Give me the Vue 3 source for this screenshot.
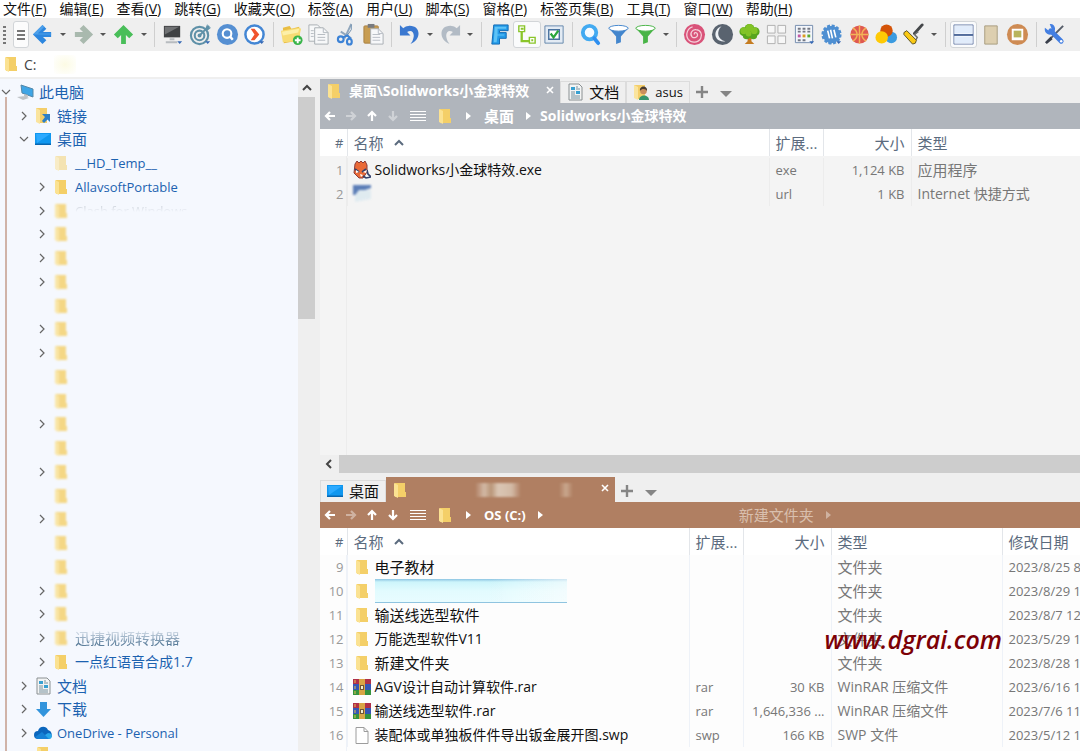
<script setup>
import { ref } from 'vue';

const menus = [
  ['文件', 'F'], ['编辑', 'E'], ['查看', 'V'], ['跳转', 'G'], ['收藏夹', 'O'], ['标签', 'A'], ['用户', 'U'],
  ['脚本', 'S'], ['窗格', 'P'], ['标签页集', 'B'], ['工具', 'T'], ['窗口', 'W'], ['帮助', 'H'],
];

// "|" is a separator, "v" a drop-down caret, "*" marks a pressed button
const toolbar = [
  'back', 'v', 'forward', 'v', 'up', 'v', '|',
  'monitor', 'target', 'find', 'go', '|',
  'newfolder', 'copy', 'cut', 'paste', '|',
  'undo', 'v', 'redo', 'v', '|',
  'letter', '*subtree', 'check', '|',
  'magnifier', 'funnel', 'funnelgreen', 'v', '|',
  'spiral', 'moon', 'oak', 'grid', 'calendar', 'badge', 'ball', 'circles', 'brush', 'v', '|',
  '*split', 'page', 'frame', '|',
  'tools',
];

const drop = '<path d="M17 19h5l-2.500 3z" fill="#3568b5"/>';

const icons = {
  back: '<path d="M2 12L12 2l4 4-3.500 3.500H21v5h-8.500L16 18l-4 4z" fill="#2d87df"/><path d="M2 12L12 2l2 2-7 7h14v1z" fill="#4da0ea"/>',
  forward: '<path d="M22 12L12 2 8 6l3.500 3.500H3v5h8.500L8 18l4 4z" fill="#a9b9ae"/>',
  up: '<path d="M12 2L2 12l4 4 3.500-3.500V22h5v-9.500L18 16l4-4z" fill="#49be59"/>',
  monitor: '<path d="M3 3h17v12H3z" fill="#404244"/><path d="M4 4h15L4 12z" fill="#707274"/><path d="M9 16h5v2H9zM5 19h12v2H5z" fill="#b8bcc0"/>' + drop,
  target: '<g fill="none" stroke="#5f91a8" stroke-width="2.200"><circle cx="11" cy="13" r="9"/><circle cx="11" cy="13" r="5"/></g><circle cx="11" cy="13" r="2" fill="#5f91a8"/><path d="M11 13L21 3" stroke="#5f91a8" stroke-width="2"/><path d="M17 6l2-5 1 3 3 1-4 3z" fill="#5f91a8"/>' + drop,
  find: '<circle cx="12" cy="12" r="11" fill="#558fd2"/><circle cx="11.500" cy="11" r="4.500" fill="none" stroke="#fff" stroke-width="2.200"/><path d="M14.500 14l3 3.500" stroke="#fff" stroke-width="2.600"/>',
  go: '<circle cx="12" cy="12" r="9.500" fill="#fff" stroke="#4386d4" stroke-width="2.600"/><path d="M8 6h4l5 6-5 6H8l4-6z" fill="#f0532d"/>' + drop,
  newfolder: '<path d="M3 5l7-2 2 3 8-2 1 14-17 3z" fill="#e9bd42"/><path d="M1 8l19-3 2 1-3 13-16 1z" fill="#f8dc74"/><path d="M2 9l18-3-1 4-16 3z" fill="#fdf0a8"/><circle cx="18.500" cy="18" r="5" fill="#38b449"/><path d="M18.500 15v6M15.500 18h6" stroke="#fff" stroke-width="2"/>',
  copy: '<g fill="#f7f8f9" stroke="#a8adb3"><path d="M2 2h9l4 4v13H2z"/><path d="M8 5h9l5 5v12H8z"/></g><path d="M17 5v5h5M11 12h8M11 15h8M11 18h8M4 8h3M4 11h3M4 14h3" fill="none" stroke="#b5bac0"/>',
  cut: '<path d="M17 1l-7 15M6 9l11 7" stroke="#91a7bd" stroke-width="2"/><path d="M17 2v5l-5 7" stroke="#6c8cac" fill="none"/><g fill="none" stroke="#3d83d6" stroke-width="2.200"><circle cx="6" cy="17" r="3"/><ellipse cx="15" cy="19.500" rx="2.500" ry="3"/></g><path d="M8 15l5-2 3 3" stroke="#3d83d6" stroke-width="2" fill="none"/>',
  paste: '<rect x="2" y="3" width="15" height="18" rx="1" fill="#c89d52" stroke="#a98244"/><path d="M6 1h7v4H6z" fill="#787b80"/><path d="M9 6h8l5 5v11H9z" fill="#f7f8fa" stroke="#a9afb5"/><path d="M17 6v5h5M11 12h8M11 15h8M11 18h8" fill="none" stroke="#b9bec5"/>',
  undo: '<path d="M2 2v11h11L9.500 9.500C14 6 19 10 15 19l-2 3c12-5 11-20-2-19-3 0-4 1-5.500 2.500z" fill="#3a78d0"/>',
  redo: '<path d="M22 2v11H11l3.500-3.500C10 6 5 10 9 19l2 3C-1 17 0 2 13 3c3 0 4 1 5.500 2.500z" fill="#b2bbc5"/>',
  letter: '<path d="M6 2h15v6h-9v2h7v6h-7v6H4z" fill="#249be9" stroke="#126bb4"/><path d="M7 4h12v2h-9v6h7v1h-7l-1 7H6z" fill="#5fc3f6"/>',
  subtree: '<path d="M7 9v10h9" fill="none" stroke="#8ac52b" stroke-width="2.400"/><g fill="#fff" stroke="#8ac52b" stroke-width="1.500"><path d="M4 3h6v6H4zM15 15h6v6h-6z"/></g><path d="M6 6h3M17 18h2" stroke="#8ac52b" stroke-width="2"/>',
  check: '<path d="M2 3h19v18H2z" fill="#e3ebf4" stroke="#6487ac"/><path d="M6 7h11v10H6z" fill="#fff" stroke="#4a73a0" stroke-width="1.500"/><path d="M8 11l3 4 5-7" fill="none" stroke="#2aa63b" stroke-width="2.400"/>',
  magnifier: '<circle cx="11" cy="10" r="7" fill="#f5faff" stroke="#42aaf1" stroke-width="4"/><path d="M16 16l4 5" stroke="#2e8ff0" stroke-width="4" stroke-linecap="round"/>',
  funnel: '<path d="M1.500 5l8 9v8l5-2v-6l8-9z" fill="#4386cd"/><ellipse cx="12" cy="5.500" rx="10" ry="3" fill="#fff" stroke="#4386cd"/>',
  funnelgreen: '<path d="M1.500 5l8 9v8l5-2v-6l8-9z" fill="#48b446"/><ellipse cx="12" cy="5.500" rx="10" ry="3" fill="#fff" stroke="#48b446"/>',
  spiral: '<circle cx="12" cy="12" r="11" fill="#d95379"/><path d="M12 12c-1-2 2-3 3-.5 1 3-3 5-5.500 3-3-3 0-8 4-7.500 5 .5 7 5 5 9-3 5-10 5-13 1C2 12 5 5 10 4" fill="none" stroke="#f5d0da" stroke-width="1.300"/>',
  moon: '<circle cx="12" cy="12" r="11" fill="#59636f"/><path d="M11 3.500C1 7 3 21 15 19 7 18 5 9 11 3.500z" fill="#edf1f5"/>',
  oak: '<path d="M10 12h4v7l3 3H7l3-3z" fill="#c57c21"/><g fill="#57a51e"><circle cx="12" cy="6" r="5"/><circle cx="6" cy="9" r="4.500"/><circle cx="18" cy="9" r="4.500"/><circle cx="9" cy="13" r="4"/><circle cx="16" cy="13" r="4"/></g><g fill="#82c326"><circle cx="12" cy="5" r="4"/><circle cx="6" cy="8" r="3.500"/><circle cx="17" cy="8" r="3.500"/><circle cx="11" cy="11" r="3"/></g>',
  grid: '<path d="M2.500 2.500h8v8h-8zM13.500 2.500h8v8h-8zM2.500 13.500h8v8h-8zM13.500 13.500h8v8h-8z" fill="#f7f7f7" stroke="#b0b0b0"/>',
  calendar: '<path d="M2.500 2.500h18v18h-18z" fill="#f3f6fb" stroke="#748cae"/><path d="M5 6h3M10 6h3M15 6h3M5 9h3M10 9h3M15 9h3M5 18h3M10 18h3" stroke="#747884" stroke-width="2"/><path d="M5 13.500h3" stroke="#c259a4" stroke-width="3"/><path d="M10 13.500h3" stroke="#dc9b20" stroke-width="3"/><path d="M15 13.500h3" stroke="#5baa32" stroke-width="3"/>' + drop,
  badge: '<circle cx="12" cy="12" r="9" fill="#4e8fd2" stroke="#4e8fd2" stroke-width="3" stroke-dasharray="3 1.700"/><circle cx="12" cy="12" r="9" fill="#4e8fd2"/><path d="M8 8l2 8M11 7l2 9M14.500 7l2 8" stroke="#fff" stroke-width="1.700"/>' + drop,
  ball: '<circle cx="12" cy="12" r="9.500" fill="#df5951"/><path d="M12 2.500v19M2.500 12h19M5 5c6 4 6 10 0 14M19 5c-6 4-6 10 0 14" fill="none" stroke="#f3b357" stroke-width="1.500"/>',
  circles: '<circle cx="17" cy="15" r="6" fill="#3b9be0"/><circle cx="12" cy="8" r="6.500" fill="#d45308"/><circle cx="7" cy="15" r="6.500" fill="#ffca05"/>',
  brush: '<path d="M21 2l-8 9" stroke="#44474a" stroke-width="3" stroke-linecap="round"/><path d="M17 9l-4 3 3 3-3 5" fill="none" stroke="#6b6d6e" stroke-width="1.500"/><path d="M2 10l3-2 10 10-1 3-3 1-9-10z" fill="#fac914" stroke="#5b5220" stroke-width="1"/>',
  split: '<path d="M2 2h20v20H2z" fill="#fff" stroke="#7085ae"/><path d="M3 3h18v8H3zM3 14h18v7H3z" fill="#e1ecfb"/><path d="M2 12.500h20" stroke="#526c9c" stroke-width="2"/>',
  page: '<path d="M6 3h13v19H6z" fill="#ddcfb0" stroke="#a89d80"/>',
  frame: '<circle cx="12" cy="12" r="11" fill="#ce8b53"/><path d="M6 6h12v12H6z" fill="#fff"/><path d="M8 8h8v7H8z" fill="#b8b45c"/>',
  tools: '<path d="M21 3L8 16" stroke="#555c68" stroke-width="2"/><path d="M8 14l-6 6 2 2 6-5z" fill="#3a3f4c"/><path d="M8 8l11 11" stroke="#447fe2" stroke-width="5" stroke-linecap="round"/><path d="M2 5l4 3 3-2-2-5c6-1 8 8 2 11-5 1-8-3-7-7z" fill="#447fe2"/><circle cx="19" cy="19" r="1.300" fill="#fff"/>',
};

// 18x18 pictures used in the tree, tabs and lists
const glyphs = {
  folder: '<path d="M4 2h10v9h1v5H4z" fill="#f4cf68"/><path d="M3 2l4 2v13l-4-2z" fill="#fbe292"/>',
  pc: '<path d="M5 2l12 4v8L6 10z" fill="#3fa5e6" stroke="#5487a8"/><path d="M1 14l8-1 4 2-6 2zM8 11l4 1v2l-4-1z" fill="#bfc3c7"/>',
  link: '<path d="M2 1h11v15H5z" fill="#f4ce6a"/><path d="M2 1l4 2v14l-4-2z" fill="#fae49e"/><path d="M8 7h8v8l-2.500-2.500L10 16l-2-2 3-4z" fill="#2c7fc7"/>',
  desktop: '<path d="M1 3h16v12H1z" fill="#1097ef"/><path d="M1 13.500h16V15H1z" fill="#0866b0"/><path d="M2 4h14L3 13z" fill="#2caaff"/>',
  doc: '<path d="M3 1h10l3 3v13H3z" fill="#f3f4f4" stroke="#8a9092"/><path d="M5 4h4v3H5zM10 8h4v3h-4z" fill="#38a0d1"/><path d="M10 4h2M10 6h4M5 9h4M5 11h4M5 13h9M5 15h9" stroke="#78919d"/>',
  download: '<path d="M6 2h7v7h4l-7.500 8L2 9h4z" fill="#3294dc"/>',
  cloud: '<path d="M4 15a4 4 0 010-8c1-5 8-6 10-1 5 1 5 9 0 9z" fill="#0b66bd"/><path d="M5 15l9-6c5 0 5 6 1 6z" fill="#2aa8ea"/><path d="M1 13l7-5 7 7H4z" fill="#1581d6"/>',
  user: '<path d="M2 2h11v14H5z" fill="#f4ce6a"/><path d="M2 2l4 2v13l-4-2z" fill="#fae49e"/><path d="M7 17c0-6 10-6 10 0z" fill="#36956b"/><circle cx="11.500" cy="8" r="3.300" fill="#c98e5c"/><path d="M8 8c-1-6 8-6 7 0-1-2-5-3-7 0z" fill="#453a31"/>',
  fox: '<path d="M2 3l2-3 2 2 2-2 2 2 2-2 2 4v7l-4 6H6L1 12z" fill="#ea6a37" stroke="#8a3b38"/><path d="M2 8l4 3M13 8l-4 3M14 9l1 4 3 3-5 1-3-2" stroke="#33406c" stroke-width="1.600" fill="none"/><path d="M3 9l3 2-3 1zM10 11l4-2-1 3zM7 13l3 1-2 2z" fill="#fff"/>',
  rar: '<path d="M0 1h18v5H0z" fill="#b03048"/><path d="M0 6h18v6H0z" fill="#3557b5"/><path d="M0 12h18v5H0z" fill="#35933e"/><path d="M6 1h6v16H6z" fill="#d9a545"/><path d="M7 7h4v5H7z" fill="#6e5434"/><path d="M8 8h2v3H8z" fill="#f3efd0"/><path d="M2 2v3M2 8v3M2 13v3" stroke="#e6c24f"/>',
  file: '<path d="M3 1.500h8l4 4v12H3z" fill="#fff" stroke="#9c9c9c"/><path d="M11 1.500v4h4" fill="none" stroke="#9c9c9c"/>',
  smudge: '<path d="M0 0h18v3L6 7v3H0z" fill="#3560a8"/><path d="M6 5h12v9L2 17v-7z" fill="#dbe9f0"/>',
};

const hidden = (arrow) => ({ level: 2, arrow, icon: 'folder', soft: true, text: '' });

const tree = [
  { level: 0, arrow: 'down', icon: 'pc', text: '此电脑' },
  { level: 1, arrow: 'right', icon: 'link', text: '链接' },
  { level: 1, arrow: 'down', icon: 'desktop', text: '桌面' },
  { level: 2, icon: 'folder', pale: true, text: '__HD_Temp__' },
  { level: 2, arrow: 'right', icon: 'folder', text: 'AllavsoftPortable' },
  { level: 2, arrow: 'right', icon: 'folder', soft: true, text: 'Clash for Windows', fade: 'fade-low' },
  ...['right', 'right', 'right', '', 'right', 'right', '', '', 'right', '', 'right', '', 'right', '', '', 'right', 'right'].map(hidden),
  { level: 2, arrow: 'right', icon: 'folder', soft: true, text: '迅捷视频转换器', fade: 'fade-top' },
  { level: 2, arrow: 'right', icon: 'folder', text: '一点红语音合成1.7' },
  { level: 1, arrow: 'right', icon: 'doc', text: '文档' },
  { level: 1, arrow: 'right', icon: 'download', text: '下载' },
  { level: 1, arrow: 'right', icon: 'cloud', text: 'OneDrive - Personal' },
  { level: 1, icon: 'folder', text: '' },
];

const panes = [
  {
    id: 'top',
    tabs: [
      { icon: 'folder', text: '桌面\\Solidworks小金球特效', active: true },
      { icon: 'doc', text: '文档' },
      { icon: 'user', text: 'asus' },
    ],
    crumbs: ['桌面', 'Solidworks小金球特效'],
    columns: [
      { key: 'no', label: '#' }, { key: 'name', label: '名称' }, { key: 'ext', label: '扩展...' },
      { key: 'size', label: '大小' }, { key: 'type', label: '类型' },
    ],
    rows: [
      { no: 1, icon: 'fox', name: 'Solidworks小金球特效.exe', ext: 'exe', size: '1,124 KB', type: '应用程序' },
      { no: 2, icon: 'smudge', soft: true, name: '', ext: 'url', size: '1 KB', type: 'Internet 快捷方式' },
    ],
  },
  {
    id: 'bottom',
    tabs: [
      { icon: 'desktop', text: '桌面' },
      { icon: 'folder', text: '', active: true },
    ],
    crumbs: ['OS (C:)'],
    dimCrumb: '新建文件夹',
    columns: [
      { key: 'no', label: '#' }, { key: 'name', label: '名称' }, { key: 'ext', label: '扩展...' },
      { key: 'size', label: '大小' }, { key: 'type', label: '类型' }, { key: 'date', label: '修改日期' },
    ],
    rows: [
      { no: 9, icon: 'folder', name: '电子教材', type: '文件夹', date: '2023/8/25 8' },
      { no: 10, icon: 'folder', name: '', covered: true, type: '文件夹', date: '2023/8/29 1' },
      { no: 11, icon: 'folder', name: '输送线选型软件', type: '文件夹', date: '2023/8/7 12' },
      { no: 12, icon: 'folder', name: '万能选型软件V11', type: '文件夹', date: '2023/5/29 1' },
      { no: 13, icon: 'folder', name: '新建文件夹', type: '文件夹', date: '2023/8/28 1' },
      { no: 14, icon: 'rar', name: 'AGV设计自动计算软件.rar', ext: 'rar', size: '30 KB', type: 'WinRAR 压缩文件', date: '2023/6/16 1' },
      { no: 15, icon: 'rar', name: '输送线选型软件.rar', ext: 'rar', size: '1,646,336 ...', type: 'WinRAR 压缩文件', date: '2023/7/6 11' },
      { no: 16, icon: 'file', name: '装配体或单独板件件导出钣金展开图.swp', ext: 'swp', size: '166 KB', type: 'SWP 文件', date: '2023/5/12 1' },
    ],
  },
];

const address = ref('C:');

// Chinese glyphs look small next to Latin ones, so size the text by its script
const script = (value) => {
  const text = String(value ?? '');
  const han = /[\u4e00-\u9fff]/.test(text);
  if (!han) return 'latin';
  return /[A-Za-z0-9]/.test(text) ? 'mixed' : 'han';
};
</script>

<template>
  <div class="app">
    <nav class="menubar">
      <button v-for="[text, key] in menus" :key="key" class="menu">{{ text }}(<u>{{ key }}</u>)</button>
    </nav>

    <div class="toolbar">
      <span class="grip"></span>
      <button class="list-button" aria-label="menu"><i></i><i></i><i></i></button>
      <template v-for="(item, i) in toolbar" :key="i">
        <span v-if="item === '|'" class="separator"></span>
        <button v-else-if="item === 'v'" class="caret" aria-label="more"><i></i></button>
        <button v-else class="tool" :class="{ pressed: item[0] === '*' }" :aria-label="item">
          <svg viewBox="0 0 24 24" v-html="icons[item.replace('*', '')]"></svg>
        </button>
      </template>
    </div>

    <div class="address">
      <svg class="glyph" viewBox="0 0 18 18" v-html="glyphs.folder"></svg>
      <input v-model="address" type="text" aria-label="address" />
    </div>

    <main class="main">
      <aside class="side">
        <div class="tree">
          <a v-for="(node, i) in tree" :key="i" href="#" class="node" :class="'level' + node.level">
            <svg class="arrow" viewBox="0 0 12 12">
              <path v-if="node.arrow === 'right'" d="M4 2l4 4-4 4" />
              <path v-if="node.arrow === 'down'" d="M2 4l4 4 4-4" />
            </svg>
            <svg class="glyph" :class="{ soft: node.soft, pale: node.pale }" viewBox="0 0 18 18" v-html="glyphs[node.icon]"></svg>
            <span v-if="node.text" :class="[script(node.text), node.fade]">{{ node.text }}</span>
          </a>
        </div>
        <div class="vscroll">
          <svg class="scroll-arrow" viewBox="0 0 12 12"><path d="M2 8l4-4 4 4" /></svg>
          <div class="thumb"></div>
        </div>
      </aside>

      <div class="panes">
        <section v-for="pane in panes" :key="pane.id" class="pane" :class="pane.id">
          <div class="tabs">
            <button v-for="(tab, i) in pane.tabs" :key="i" class="tab" :class="{ active: tab.active }">
              <svg class="glyph" viewBox="0 0 18 18" v-html="glyphs[tab.icon]"></svg>
              <span v-if="tab.text" :class="script(tab.text)">{{ tab.text }}</span>
              <span v-else class="blot"></span>
              <svg v-if="tab.active" class="close" viewBox="0 0 8 8"><path d="M1 1l6 6M7 1l-6 6" /></svg>
            </button>
            <button class="tab-add" aria-label="new tab">
              <svg viewBox="0 0 12 12"><path d="M6 0v12M0 6h12" /></svg>
            </button>
            <button class="tab-more" aria-label="tab list"><i></i></button>
          </div>

          <div class="crumbs">
            <button class="nav" aria-label="back"><svg viewBox="0 0 12 12"><path d="M11 6H3M6 2L2 6l4 4" /></svg></button>
            <button class="nav dim" aria-label="forward"><svg viewBox="0 0 12 12"><path d="M1 6h8M6 2l4 4-4 4" /></svg></button>
            <button class="nav" aria-label="up"><svg viewBox="0 0 12 12"><path d="M6 11V3M2 6l4-4 4 4" /></svg></button>
            <button class="nav" :class="{ dim: pane.id === 'top' }" aria-label="down"><svg viewBox="0 0 12 12"><path d="M6 1v8M2 6l4 4 4-4" /></svg></button>
            <button class="burger" aria-label="options"><i></i><i></i><i></i><i></i></button>
            <svg class="glyph" viewBox="0 0 18 18" v-html="glyphs.folder"></svg>
            <span class="tri first"></span>
            <template v-for="(crumb, i) in pane.crumbs" :key="crumb">
              <a href="#" :class="script(crumb)">{{ crumb }}</a>
              <span v-if="i === 0" class="tri"></span>
            </template>
            <template v-if="pane.dimCrumb">
              <a href="#" class="dim-crumb">{{ pane.dimCrumb }}</a>
              <span class="tri dim"></span>
            </template>
          </div>

          <div class="list">
            <table>
              <colgroup>
                <col v-for="col in pane.columns" :key="col.key" :class="'w-' + col.key" />
              </colgroup>
              <thead>
                <tr>
                  <th v-for="col in pane.columns" :key="col.key" :class="[col.key, script(col.label)]">
                    {{ col.label }}
                    <svg v-if="col.key === 'name'" class="sort" viewBox="0 0 12 12"><path d="M2 8l4-4 4 4" /></svg>
                  </th>
                </tr>
              </thead>
              <tbody>
                <tr v-for="row in pane.rows" :key="row.no">
                  <td v-for="col in pane.columns" :key="col.key" :class="[col.key, script(row[col.key])]">
                    <div v-if="col.key === 'name'" class="file">
                      <svg class="glyph" :class="{ soft: row.soft }" viewBox="0 0 18 18" v-html="glyphs[row.icon]"></svg>
                      <span v-if="row.covered" class="cover"></span>
                      <span v-else>{{ row.name }}</span>
                    </div>
                    <template v-else>{{ row[col.key] }}</template>
                  </td>
                </tr>
              </tbody>
            </table>
          </div>

          <div v-if="pane.id === 'top'" class="hscroll">
            <svg class="scroll-arrow" viewBox="0 0 12 12"><path d="M8 2L4 6l4 4" /></svg>
            <div class="thumb"></div>
          </div>
          <div v-else class="watermark">www.dgrai.com</div>
        </section>
      </div>
    </main>
  </div>
</template>

<style>
body {
  margin: 0;
}
</style>

<style scoped>
.app {
  display: flex;
  flex-direction: column;
  height: 100vh;
  overflow: hidden;
  background: #efefef;
  font-family: "Open Sans", "Noto Sans CJK SC", sans-serif;
  font-size: 14px;
  color: #111;
}

.app * {
  box-sizing: border-box;
}

button {
  padding: 0;
  border: 0;
  background: none;
  font: inherit;
  color: inherit;
}

a {
  color: inherit;
  text-decoration: none;
}

svg {
  display: block;
  flex: none;
}

.latin {
  font-size: 13px;
}

.mixed {
  font-size: 14px;
}

.han {
  font-size: 15px;
}

.glyph {
  width: 18px;
  height: 18px;
}

.glyph.soft {
  opacity: 0.8;
  filter: blur(1px);
}

.glyph.pale {
  opacity: 0.5;
}

/* menu bar */
.menubar {
  display: flex;
  flex: none;
  gap: 13px;
  height: 18px;
  padding-left: 3px;
  background: #fff;
}

.menu {
  line-height: 18px;
  white-space: nowrap;
}

/* toolbar */
.toolbar {
  display: flex;
  flex: none;
  align-items: center;
  height: 33px;
  padding-right: 12px;
}

.grip {
  width: 3px;
  height: 18px;
  margin: 0 7px 0 3px;
  background: repeating-linear-gradient(#777 0 2px, transparent 2px 4px);
}

.list-button {
  display: flex;
  flex-direction: column;
  align-items: center;
  justify-content: center;
  gap: 2px;
  width: 16px;
  height: 27px;
  border: 1px solid #d2d5d8;
  border-radius: 3px;
  background: #fcfcfc;
}

.list-button i {
  width: 8px;
  height: 2px;
  background: #777;
}

.tool {
  display: flex;
  flex: 1 0 27px;
  align-items: center;
  justify-content: center;
  height: 27px;
}

.tool svg {
  width: 23px;
  height: 23px;
}

.tool.pressed {
  border: 1px solid #d2d5d8;
  border-radius: 3px;
  background: #fafbfc;
}

.caret {
  display: flex;
  flex: none;
  justify-content: center;
  width: 13px;
}

.caret i {
  border: 3px solid transparent;
  border-top-color: #555;
  border-bottom: 0;
}

.separator {
  flex: none;
  width: 1px;
  height: 25px;
  margin: 0 4px;
  background: #cfcfcf;
}

/* address bar */
.address {
  display: flex;
  flex: none;
  align-items: center;
  height: 26px;
  padding-left: 2px;
  background: #fff;
}

.address input {
  flex: 1;
  padding: 0 4px;
  border: 0;
  outline: 0;
  background: radial-gradient(#fcfbe4, #fff) 34px 0 / 22px 100% no-repeat;
  font: inherit;
  color: #444;
}

.main {
  display: flex;
  flex: 1;
  min-height: 0;
  padding-top: 2px;
}

/* folder tree */
.side {
  display: flex;
  flex: none;
  width: 320px;
}

.tree {
  display: grid;
  grid-template-rows: repeat(28, 1fr) 6px;
  flex: 1;
  min-width: 0;
  padding-top: 1px;
  overflow: hidden;
  background: linear-gradient(#d0b3a8, #d0b3a8) 5px 18px / 2px 100% no-repeat, #f5f8fe;
}

.node {
  display: flex;
  align-items: center;
  gap: 4px;
  min-height: 0;
  line-height: 22px;
  color: #1c62b0;
  white-space: nowrap;
}

.node span {
  margin-left: 1px;
}

.node:last-child {
  align-items: flex-start;
}

.level1 {
  padding-left: 18px;
}

.level2 {
  padding-left: 36px;
}

.arrow {
  width: 12px;
  height: 12px;
}

.arrow path,
.scroll-arrow path {
  fill: none;
  stroke: #666;
  stroke-width: 1.200;
}

.fade-low {
  color: #8b95a0;
  mask-image: linear-gradient(transparent 4px, #0006 5px, transparent 12px);
}

.fade-top {
  color: #5d7f9c;
  mask-image: linear-gradient(#0003 4px, #000 17px);
}

.vscroll {
  flex: none;
  width: 17px;
  margin-right: 5px;
}

.scroll-arrow {
  width: 12px;
  height: 12px;
  margin: 3px;
}

.scroll-arrow path {
  stroke: #444;
  stroke-width: 2;
}

.vscroll .thumb {
  height: 33%;
  background: #cdcdcd;
}

/* panes */
.panes {
  display: grid;
  grid-template-rows: 394fr 278fr;
  flex: 1;
  min-width: 0;
}

.pane {
  position: relative;
  display: flex;
  flex-direction: column;
  min-height: 0;
  overflow: hidden;
}

.top {
  --accent: #b0b5bc;
  --body: #f4f4f4;
  --line: #ececec;
}

.bottom {
  --accent: #b07f62;
  --body: #fdfdfd;
  --line: #eef2f8;
  padding-top: 4px;
}

.tabs {
  display: flex;
  flex: none;
  align-items: flex-end;
  height: 25px;
}

.top .tabs {
  height: 24px;
}

.tab {
  display: flex;
  align-items: center;
  gap: 5px;
  height: 22px;
  padding: 0 6px 2px 5px;
  border: 1px solid #dcdcdc;
  border-bottom: 0;
  line-height: 20px;
  white-space: nowrap;
}

.tab.active {
  align-self: stretch;
  gap: 6px;
  height: auto;
  padding-bottom: 0;
  border: 0;
  background: var(--accent);
  color: #fff;
  font-weight: 700;
}

.close {
  width: 8px;
  height: 8px;
  margin: 0 0 3px 11px;
}

.close path {
  stroke: #fff;
  stroke-width: 1.600;
}

.blot {
  width: 169px;
  height: 14px;
  background:
    linear-gradient(90deg, transparent, #d2b9a5 20%, #b99578 35%, #dac6b4 50%, #d2b9a5 80%, transparent) 60px 0 / 46px 100% no-repeat,
    linear-gradient(90deg, transparent, #c9a78d, transparent) 144px 0 / 14px 100% no-repeat;
  filter: blur(1px);
}

.tab-add {
  width: 24px;
  height: 22px;
  padding: 0 6px;
}

.tab-add svg {
  width: 12px;
  height: 12px;
}

.tab-add path {
  stroke: #858585;
  stroke-width: 2.400;
}

.tab-more {
  width: 24px;
  height: 22px;
}

.tab-more i {
  display: inline-block;
  border: 6px solid transparent;
  border-top-color: #858585;
  border-bottom: 0;
  vertical-align: middle;
}

.crumbs {
  display: flex;
  flex: none;
  align-items: center;
  height: 26px;
  background: var(--accent);
  color: #fff;
  font-weight: 700;
  line-height: 24px;
  white-space: nowrap;
}

.nav {
  width: 21px;
  padding: 0 5px 0 4px;
}

.nav svg {
  width: 12px;
  height: 12px;
}

.nav path {
  fill: none;
  stroke: #fff;
  stroke-width: 2.200;
}

.dim {
  opacity: 0.4;
}

.burger {
  display: flex;
  flex-direction: column;
  gap: 2px;
  width: 16px;
  margin: 0 10px 0 6px;
}

.burger i {
  height: 1px;
  background: #fff;
}

.tri {
  margin: 0 9px 0 12px;
  border: 4px solid transparent;
  border-left: 5px solid #fff;
  border-right: 0;
}

.tri.first {
  margin: 0 13px 0 12px;
}

.dim-crumb {
  margin-left: 187px;
  font-size: 15px;
  font-weight: 400;
  color: #d9bfae;
}

/* file lists */
.list {
  flex: 1;
  min-height: 0;
  overflow: hidden;
  background:
    linear-gradient(var(--line), var(--line)) 26px 0 / 1px 100% no-repeat,
    var(--body);
}

table {
  width: 100%;
  border-collapse: collapse;
  table-layout: fixed;
}

.w-no {
  width: 27px;
}

.w-ext {
  width: 54px;
}

.w-size {
  width: 88px;
}

.w-type {
  width: 169px;
}

.bottom .w-type {
  width: 171px;
}

.w-date {
  width: 78px;
}

th {
  height: 27px;
  padding: 0 6px;
  border-right: 1px solid #e3e6ea;
  background: #fff;
  color: #5b6b7e;
  font-weight: 400;
  line-height: 22px;
  text-align: left;
  white-space: nowrap;
}

th:last-child,
td:last-child {
  border-right: 0;
}

.sort {
  display: inline-block;
  width: 12px;
  height: 12px;
  margin-left: 6px;
}

.sort path {
  fill: none;
  stroke: #5b6b7e;
  stroke-width: 2;
}

td {
  height: 24px;
  padding: 0 6px;
  border-right: 1px solid var(--line);
  color: #777;
  line-height: 22px;
  white-space: nowrap;
  overflow: hidden;
}

td.name {
  padding-left: 5px;
}

.top tbody::before {
  content: "";
  display: block;
  height: 2px;
}

.no {
  padding: 0 3px;
  text-align: right;
}

td.no {
  color: #999;
}

.size {
  text-align: right;
}

.file {
  display: flex;
  align-items: center;
  gap: 4px;
  height: 24px;
  color: #111;
}

.cover {
  width: 192px;
  height: 24px;
  border-bottom: 1px solid #8fc4e0;
  background: linear-gradient(90deg, transparent 60%, #fdfdfd99), linear-gradient(#8cc4e2, #cdf5fb 3px, #e2fbfe 12px, #e8fcff);
}

.hscroll {
  display: flex;
  flex: none;
  height: 18px;
}

.hscroll .thumb {
  flex: 1;
  margin-left: 1px;
  background: #cdcdcd;
}

.watermark {
  position: absolute;
  top: 148px;
  right: 78px;
  color: #7c0006;
  font-size: 25px;
  font-style: italic;
  font-weight: 600;
  line-height: 36px;
}
</style>
